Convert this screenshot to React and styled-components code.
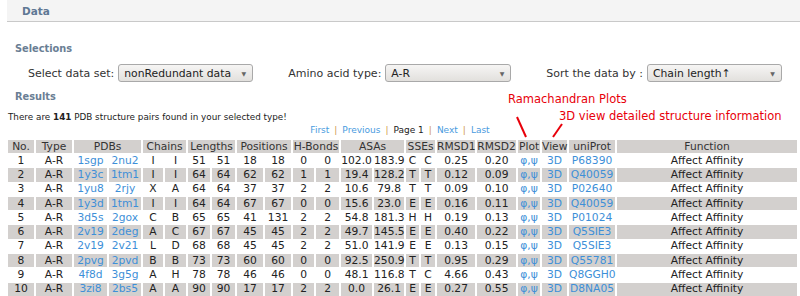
import styled, { createGlobalStyle } from 'styled-components';

const GlobalStyle = createGlobalStyle`
    html, body {
        margin: 0;
        padding: 0;
        background: #fff;
        font-family: "DejaVu Sans", Verdana, sans-serif;
        color: #222;
    }
`

const Page = styled.div`
    position: relative;
    width: 800px;
    height: 296px;
    overflow: hidden;
`
const TitleBar = styled.div`
    margin-left: 7px;
    height: 21px;
    line-height: 22px;
    padding-left: 15px;
    background: #f4f4f4;
    border-bottom: 1px solid #c9c9c9;
    font-size: 10.5px;
    font-weight: bold;
    color: #5f7894;
`
const SectionTitle = styled.div`
    margin-top: ${ ( { $top } ) => $top }px;
    padding-left: 15px;
    height: 14px;
    line-height: 14px;
    font-size: 9.8px;
    font-weight: bold;
    color: #6a7e94;
`
const SelectRow = styled.div`
    display: flex;
    align-items: center;
    gap: 35px;
    margin-top: 8px;
    padding-left: 28px;
    height: 18px;
`
const Field = styled.label`
    display: flex;
    align-items: center;
    gap: 4px;
    font-size: 11px;
    color: #333;
    white-space: nowrap;
`
const FakeSelect = styled.div`
    box-sizing: border-box;
    display: flex;
    align-items: center;
    justify-content: space-between;
    width: ${ ( { $w } ) => $w }px;
    height: 18px;
    padding: 0 6px 0 5px;
    border: 1px solid #a9a9a9;
    border-radius: 3px;
    background: linear-gradient(#f6f5f4, #e2e0dd);
    font-size: 10.8px;
    color: #222;
    &::after {
        content: "▼";
        font-size: 6px;
        color: #666;
    }
`
const Summary = styled.div`
    margin-top: 7px;
    padding-left: 8px;
    height: 12px;
    line-height: 12px;
    font-size: 8.8px;
    color: #222;
    b { font-weight: bold; }
`
const Pager = styled.div`
    display: flex;
    justify-content: center;
    gap: 5px;
    margin-top: 1px;
    height: 12px;
    line-height: 12px;
    font-size: 9px;
    color: #222;
`
const PageLink = styled.a`
    color: #4a9be0;
    text-decoration: none;
`
const Sep = styled.span`
    color: #d0984a;
`
const Table = styled.table`
    margin: 3px 0 0 6px;
    width: 793px;
    table-layout: fixed;
    border-collapse: separate;
    border-spacing: 2px 1px;
    font-size: 10.7px;
`
const Col = styled.col`
    width: ${ ( { $w } ) => $w }px;
`
const Th = styled.th`
    height: 13px;
    padding: 0;
    line-height: 12px;
    background: #d3d0ce;
    font-weight: normal;
    color: #333;
    text-align: center;
    white-space: nowrap;
`
const Td = styled.td`
    height: 13.3px;
    padding: 0;
    line-height: 12px;
    background: ${ ( { $shade } ) => $shade ? '#d3d0ce' : '#fff' };
    color: ${ ( { $link } ) => $link ? '#3d8fd8' : '#222' };
    text-align: center;
    white-space: nowrap;
`
const Note = styled.div`
    position: absolute;
    left: ${ ( { $x } ) => $x }px;
    top: ${ ( { $y } ) => $y }px;
    font-size: 11.5px;
    line-height: 14px;
    color: #e8000a;
    white-space: nowrap;
`
const Arrows = styled.svg`
    position: absolute;
    left: 0;
    top: 0;
    pointer-events: none;
`

const widths = [26, 36, 33, 32, 20, 21, 22, 23, 26, 26, 21, 23, 31, 30, 13, 14, 38, 39, 22, 25, 46, 180]

const headers = [
    ['No.', 1], ['Type', 1], ['PDBs', 2], ['Chains', 2], ['Lengths', 2], ['Positions', 2],
    ['H-Bonds', 2], ['ASAs', 2], ['SSEs', 2], ['RMSD1', 1], ['RMSD2', 1], ['Plot', 1],
    ['View', 1], ['uniProt', 1], ['Function', 1],
]

const rows = [
    [1, '1sgp', '2nu2', 'I', 'I', 51, 51, 18, 18, 0, 0, '102.0', '183.9', 'C', 'C', '0.25', '0.20', 'P68390'],
    [2, '1y3c', '1tm1', 'I', 'I', 64, 64, 62, 62, 1, 1, '19.4', '128.2', 'T', 'T', '0.12', '0.09', 'Q40059'],
    [3, '1yu8', '2rjy', 'X', 'A', 64, 64, 37, 37, 2, 2, '10.6', '79.8', 'T', 'T', '0.09', '0.10', 'P02640'],
    [4, '1y3d', '1tm1', 'I', 'I', 64, 64, 67, 67, 0, 0, '15.6', '23.0', 'E', 'E', '0.16', '0.11', 'Q40059'],
    [5, '3d5s', '2gox', 'C', 'B', 65, 65, 41, 131, 2, 2, '54.8', '181.3', 'H', 'H', '0.19', '0.13', 'P01024'],
    [6, '2v19', '2deg', 'A', 'C', 67, 67, 45, 45, 2, 2, '49.7', '145.5', 'E', 'E', '0.40', '0.22', 'Q5SIE3'],
    [7, '2v19', '2v21', 'L', 'D', 68, 68, 45, 45, 2, 2, '51.0', '141.9', 'E', 'E', '0.13', '0.15', 'Q5SIE3'],
    [8, '2pvg', '2pvd', 'B', 'B', 73, 73, 60, 60, 0, 0, '92.5', '250.9', 'T', 'T', '0.95', '0.29', 'Q55781'],
    [9, '4f8d', '3g5g', 'A', 'H', 78, 78, 46, 46, 0, 0, '48.1', '116.8', 'T', 'C', '4.66', '0.43', 'Q8GGH0'],
    [10, '3zi8', '2bs5', 'A', 'A', 90, 90, 17, 17, 2, 2, '0.0', '26.1', 'E', 'E', '0.27', '0.55', 'D8NA05'],
]

const ResultRow = ( { row } ) => {
    const [no, pdb1, pdb2, ...rest] = row
    const uniProt = rest[rest.length - 1]
    const values = rest.slice(0, -1)
    const shade = no % 2 === 0
    return (
        <tr>
            <Td $shade={shade}>{no}</Td>
            <Td $shade={shade}>A-R</Td>
            <Td $shade={shade} $link>{pdb1}</Td>
            <Td $shade={shade} $link>{pdb2}</Td>
            {values.map((v, i) => <Td key={i} $shade={shade}>{v}</Td>)}
            <Td $shade={shade} $link>φ,ψ</Td>
            <Td $shade={shade} $link>3D</Td>
            <Td $shade={shade} $link>{uniProt}</Td>
            <Td $shade={shade}>Affect Affinity</Td>
        </tr>
    )
}

const App = () => {
    return (
        <Page>
            <GlobalStyle />
            <TitleBar>Data</TitleBar>
            <SectionTitle $top={20}>Selections</SectionTitle>
            <SelectRow>
                <Field>Select data set: <FakeSelect $w={135}>nonRedundant data</FakeSelect></Field>
                <Field>Amino acid type: <FakeSelect $w={126}>A-R</FakeSelect></Field>
                <Field>Sort the data by : <FakeSelect $w={135}>Chain length↑</FakeSelect></Field>
            </SelectRow>
            <SectionTitle $top={8}>Results</SectionTitle>
            <Summary>There are <b>141</b> PDB structure pairs found in your selected type!</Summary>
            <Pager>
                <PageLink>First</PageLink><Sep>|</Sep>
                <PageLink>Previous</PageLink><Sep>|</Sep>
                <span>Page 1</span><Sep>|</Sep>
                <PageLink>Next</PageLink><Sep>|</Sep>
                <PageLink>Last</PageLink>
            </Pager>
            <Table>
                <colgroup>
                    {widths.map((w, i) => <Col key={i} $w={w} />)}
                </colgroup>
                <thead>
                    <tr>
                        {headers.map(([label, span]) => <Th key={label} colSpan={span}>{label}</Th>)}
                    </tr>
                </thead>
                <tbody>
                    {rows.map(row => <ResultRow key={row[0]} row={row} />)}
                </tbody>
            </Table>
            <Note $x={508} $y={92}>Ramachandran Plots</Note>
            <Note $x={559} $y={109}>3D view detailed structure information</Note>
            <Arrows width="800" height="296">
                <line x1="517" y1="117" x2="526" y2="137" stroke="#e8000a" strokeWidth="2" />
                <line x1="562" y1="124" x2="553" y2="137" stroke="#e8000a" strokeWidth="2" />
            </Arrows>
        </Page>
    )
}
export default App;
